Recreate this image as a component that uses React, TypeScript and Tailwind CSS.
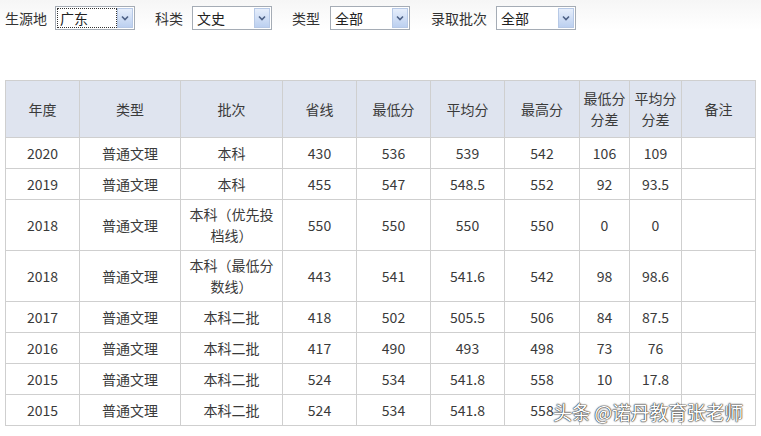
import React from "react";

const font = { fontFamily: '"Noto Sans CJK SC", "Noto Sans", sans-serif' };

function FakeSelect({ value, focused }: { value: string; focused?: boolean }) {
  return (
    <div className="flex h-[24px] w-[80px] items-stretch border border-[#a5acb5] bg-white p-[1px]">
      <div
        className={
          "flex flex-1 items-center pl-[2px] text-[14px] leading-none text-[#222] " +
          (focused ? "border border-dotted border-[#333]" : "border border-transparent")
        }
      >
        {value}
      </div>
      <div className="flex w-[16px] items-center justify-center border border-[#b7c9e6] bg-gradient-to-b from-[#e6eefb] to-[#bcd0f0]">
        <svg width="8" height="6" viewBox="0 0 8 6">
          <path d="M1 1.5 L4 4.5 L7 1.5" fill="none" stroke="#4d6185" strokeWidth="1.6" />
        </svg>
      </div>
    </div>
  );
}

type Row = { y: string; t: string; b: React.ReactNode; s: string; lo: string; av: string; hi: string; d1: string; d2: string; tall?: boolean };

const rows: Row[] = [
  { y: "2020", t: "普通文理", b: "本科", s: "430", lo: "536", av: "539", hi: "542", d1: "106", d2: "109" },
  { y: "2019", t: "普通文理", b: "本科", s: "455", lo: "547", av: "548.5", hi: "552", d1: "92", d2: "93.5" },
  { y: "2018", t: "普通文理", b: "本科（优先投档线）", s: "550", lo: "550", av: "550", hi: "550", d1: "0", d2: "0", tall: true },
  { y: "2018", t: "普通文理", b: "本科（最低分数线）", s: "443", lo: "541", av: "541.6", hi: "542", d1: "98", d2: "98.6", tall: true },
  { y: "2017", t: "普通文理", b: "本科二批", s: "418", lo: "502", av: "505.5", hi: "506", d1: "84", d2: "87.5" },
  { y: "2016", t: "普通文理", b: "本科二批", s: "417", lo: "490", av: "493", hi: "498", d1: "73", d2: "76" },
  { y: "2015", t: "普通文理", b: "本科二批", s: "524", lo: "534", av: "541.8", hi: "558", d1: "10", d2: "17.8" },
  { y: "2015", t: "普通文理", b: "本科二批", s: "524", lo: "534", av: "541.8", hi: "558", d1: "", d2: "" },
];

const widths = [74, 101, 102, 74, 74, 74, 75, 50, 52, 74];

export default function App() {
  const cell = "border border-[#cfcfcf] px-[8px] text-center align-middle";
  return (
    <div className="relative h-[436px] w-[761px] overflow-hidden bg-white text-[#333]" style={font}>
      <div className="flex items-center bg-gradient-to-b from-[#f6f6f6] to-white pl-[5px] pt-[6px] text-[14px] text-[#333]">
        <span>生源地</span>
        <div className="ml-[8px]"><FakeSelect value="广东" focused /></div>
        <span className="ml-[20px]">科类</span>
        <div className="ml-[9px]"><FakeSelect value="文史" /></div>
        <span className="ml-[20px]">类型</span>
        <div className="ml-[10px]"><FakeSelect value="全部" /></div>
        <span className="ml-[21px]">录取批次</span>
        <div className="ml-[9px]"><FakeSelect value="全部" /></div>
      </div>

      <table className="ml-[5px] mt-[50px] w-[751px] table-fixed border-collapse text-[14px] leading-[21px] text-[#3a3a3a]">
        <colgroup>
          {widths.map((w, i) => (
            <col key={i} style={{ width: w }} />
          ))}
        </colgroup>
        <thead>
          <tr className="h-[57px] bg-[#dfe4ef]">
            <th className={cell + " font-normal"}>年度</th>
            <th className={cell + " font-normal"}>类型</th>
            <th className={cell + " font-normal"}>批次</th>
            <th className={cell + " font-normal"}>省线</th>
            <th className={cell + " font-normal"}>最低分</th>
            <th className={cell + " font-normal"}>平均分</th>
            <th className={cell + " font-normal"}>最高分</th>
            <th className={"border border-[#cfcfcf] px-0 text-center align-middle font-normal"}>最低分<br />分差</th>
            <th className={"border border-[#cfcfcf] px-0 text-center align-middle font-normal"}>平均分<br />分差</th>
            <th className={cell + " font-normal"}>备注</th>
          </tr>
        </thead>
        <tbody>
          {rows.map((r, i) => (
            <tr key={i} className={r.tall ? "h-[51px]" : "h-[31px]"}>
              <td className={cell}>{r.y}</td>
              <td className={cell}>{r.t}</td>
              <td className={cell}>{r.b}</td>
              <td className={cell}>{r.s}</td>
              <td className={cell}>{r.lo}</td>
              <td className={cell}>{r.av}</td>
              <td className={cell}>{r.hi}</td>
              <td className="border border-[#cfcfcf] px-0 text-center align-middle">{r.d1}</td>
              <td className="border border-[#cfcfcf] px-0 text-center align-middle">{r.d2}</td>
              <td className={cell}></td>
            </tr>
          ))}
        </tbody>
      </table>

      <div
        className="absolute left-[553px] top-[400px] whitespace-nowrap text-[19px] leading-[24px] tracking-[-0.3px] text-white"
        style={{ textShadow: "0 0 1px #222, 0 0 1px #222, 0 0 2px rgba(0,0,0,0.7)" }}
      >
        头条 @诺丹教育张老师
      </div>
    </div>
  );
}
